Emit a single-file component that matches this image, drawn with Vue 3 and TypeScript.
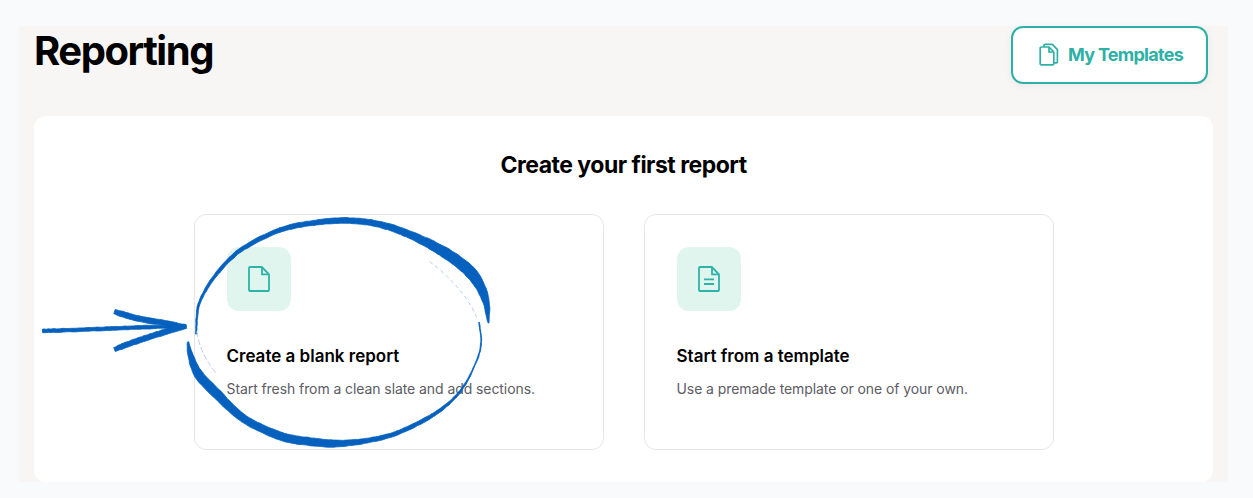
<template>
  <div class="page">
    <div class="panel">
      <header class="top">
        <h1>Reporting</h1>
        <button class="templates-btn">
          <svg width="20" height="23" viewBox="0 0 20 23" fill="none" stroke="currentColor" stroke-width="1.7" stroke-linejoin="round">
            <path d="M2.200 4h7.800l4.800 5v11.800a1 1 0 0 1-1 1H2.200a1 1 0 0 1-1-1V5a1 1 0 0 1 1-1z" />
            <path d="M10 4v5h4.800" />
            <path d="M5 4V2.400a1 1 0 0 1 1-1h7.400l5 5.200v12.200a1 1 0 0 1-1 1h-2.600" />
          </svg>
          <span>My Templates</span>
        </button>
      </header>

      <section class="card">
        <h2>Create your first report</h2>
        <div class="options">
          <div v-for="opt in options" :key="opt.title" class="option">
            <div class="icon-box">
              <svg width="22" height="26" viewBox="0 0 22 26" fill="none" stroke="#2fb3a8" stroke-width="1.8" stroke-linejoin="round">
                <path d="M2 1h11.800L21 8.400V24a1 1 0 0 1-1 1H2a1 1 0 0 1-1-1V2a1 1 0 0 1 1-1z" />
                <path d="M14 1v7.400h7" />
                <path v-if="opt.lines" d="M6 13.300h10M6 18h10" />
              </svg>
            </div>
            <h3>{{ opt.title }}</h3>
            <p>{{ opt.text }}</p>
          </div>
        </div>
      </section>
    </div>

    <!-- hand drawn annotation over the page -->
    <svg class="scribble" width="1253" height="498" viewBox="0 0 1253 498">
      <path v-for="(d, i) in brushPaths" :key="i" :d="d" fill="#0561bd" stroke="#0561bd" stroke-width="0.8" stroke-linejoin="round" />
      <g fill="none" stroke="#b9cdf5" stroke-width="1" stroke-linecap="round">
        <path d="M430 262C448 275 468 296 477 318" stroke-dasharray="3 4" />
        <path d="M197 332C199 346 205 360 216 373" stroke-dasharray="5 3" />
      </g>
    </svg>
  </div>
</template>

<script setup lang="ts">
interface ReportOption {
  title: string;
  text: string;
  lines: boolean;
}

type BrushPoint = [number, number, number];

const options: ReportOption[] = [
  { title: 'Create a blank report', text: 'Start fresh from a clean slate and add sections.', lines: false },
  { title: 'Start from a template', text: 'Use a premade template or one of your own.', lines: true },
];

// centre line + width of each marker stroke
const strokes: BrushPoint[][] = [
  [[196, 334, 1], [198, 308, 2], [205, 291, 2.5], [215, 276, 3], [230, 259, 3.5], [247, 246, 4], [280, 230, 4.5], [313, 223, 5], [347, 220.5, 5.5], [380, 224.5, 6], [413, 236, 7.5], [447, 254, 10.5], [472, 274, 11.5], [485, 298, 7.5], [488.5, 323, 1]],
  [[188, 342, 1.5], [191, 357, 5.5], [199, 375, 9], [216, 393, 9.5], [243, 418, 7.5], [280, 436, 8], [313, 442, 8], [340, 443.5, 6.5], [370, 440, 4.5], [397, 433, 4], [433, 415, 3.5], [458, 394, 2], [473, 369, 1], [481, 345, 1], [479, 322, 0.5]],
  [[42.5, 331, 3.6], [100, 329, 3.6], [150, 327, 3.6], [186, 326.5, 2.5]],
  [[114.5, 311.6, 4.5], [122, 314, 5.6], [140, 319, 5.6], [165, 323, 5], [186, 326.5, 3.5]],
  [[114.5, 349.5, 4], [122, 346.5, 5], [140, 340, 5.6], [165, 332, 5.6], [186, 326.5, 3.5]],
];

function catmull(a: number, b: number, c: number, d: number, t: number): number {
  return 0.5 * (2 * b + (c - a) * t + (2 * a - 5 * b + 4 * c - d) * t * t + (3 * b - a - 3 * c + d) * t * t * t);
}

function brush(pts: BrushPoint[], seed: number): string {
  const left: string[] = [];
  const right: string[] = [];
  let n = seed;
  // small pseudo random wobble so the edge looks like a dry marker
  const wobble = () => {
    n = (n * 9301 + 49297) % 233280;
    return (n / 233280 - 0.5) * 0.5;
  };
  for (let i = 0; i < pts.length - 1; i++) {
    const p0 = pts[Math.max(i - 1, 0)];
    const p1 = pts[i];
    const p2 = pts[i + 1];
    const p3 = pts[Math.min(i + 2, pts.length - 1)];
    const steps = Math.max(3, Math.round(Math.hypot(p2[0] - p1[0], p2[1] - p1[1]) / 3));
    for (let s = 0; s <= steps; s++) {
      const t = s / steps;
      const x = catmull(p0[0], p1[0], p2[0], p3[0], t);
      const y = catmull(p0[1], p1[1], p2[1], p3[1], t);
      const dx = catmull(p0[0], p1[0], p2[0], p3[0], t + 0.01) - x;
      const dy = catmull(p0[1], p1[1], p2[1], p3[1], t + 0.01) - y;
      const len = Math.hypot(dx, dy) || 1;
      const w = (p1[2] + (p2[2] - p1[2]) * t) / 2;
      const nx = -dy / len;
      const ny = dx / len;
      const a = w + wobble();
      const b = w + wobble();
      left.push(`${(x + nx * a).toFixed(1)} ${(y + ny * a).toFixed(1)}`);
      right.unshift(`${(x - nx * b).toFixed(1)} ${(y - ny * b).toFixed(1)}`);
    }
  }
  return `M${left.join('L')}L${right.join('L')}Z`;
}

const brushPaths = strokes.map((s, i) => brush(s, 17 + i * 31));
</script>

<style>
html,
body {
  margin: 0;
  background: #f9fafc;
}
</style>

<style scoped>
.page {
  position: relative;
  height: 498px;
  box-sizing: border-box;
  padding: 26px 25px 16px 19px;
  font-family: Inter, "Liberation Sans", sans-serif;
  background: #f9fafc;
  overflow: hidden;
}

.panel {
  height: 100%;
  box-sizing: border-box;
  padding: 0 15px;
  background: #f8f6f4;
  display: flex;
  flex-direction: column;
}

.top {
  height: 90px;
  flex: none;
  display: flex;
  justify-content: space-between;
  align-items: flex-start;
}

h1 {
  margin: 1px 0 0;
  font-size: 40px;
  line-height: 48px;
  font-weight: 700;
  letter-spacing: -1.45px;
  color: #000;
}

.templates-btn {
  width: 197px;
  height: 58px;
  margin-right: 5px;
  display: flex;
  align-items: center;
  gap: 9px;
  background: #fff;
  border: 2px solid #2fb0a5;
  border-radius: 12px;
  box-shadow: 0 2px 10px rgba(0, 0, 0, 0.05);
  color: #2fb0a5;
  font-family: inherit;
  font-size: 18px;
  font-weight: 700;
  letter-spacing: -0.72px;
  padding: 0 0 2px 26px;
}

.card {
  flex: 1;
  background: #fff;
  border-radius: 12px;
  padding-top: 35px;
}

h2 {
  margin: 0;
  text-align: center;
  font-size: 23px;
  line-height: 28px;
  font-weight: 700;
  letter-spacing: -0.5px;
  color: #000;
}

.options {
  margin-top: 35px;
  display: flex;
  justify-content: center;
  gap: 40px;
}

.option {
  width: 410px;
  height: 236px;
  box-sizing: border-box;
  padding: 32px;
  background: #fff;
  border: 1px solid #e6e6e8;
  border-radius: 12px;
}

.icon-box {
  width: 64px;
  height: 64px;
  border-radius: 12px;
  background: #dff5ee;
  display: flex;
  align-items: center;
  justify-content: center;
}

h3 {
  margin: 33px 0 0;
  font-size: 17px;
  line-height: 24px;
  font-weight: 600;
  letter-spacing: 0;
  color: #000;
}

p {
  margin: 11px 0 0;
  font-size: 14px;
  line-height: 20px;
  letter-spacing: -0.08px;
  color: #5c5c64;
}

.scribble {
  position: absolute;
  top: 0;
  left: 0;
  pointer-events: none;
}
</style>
